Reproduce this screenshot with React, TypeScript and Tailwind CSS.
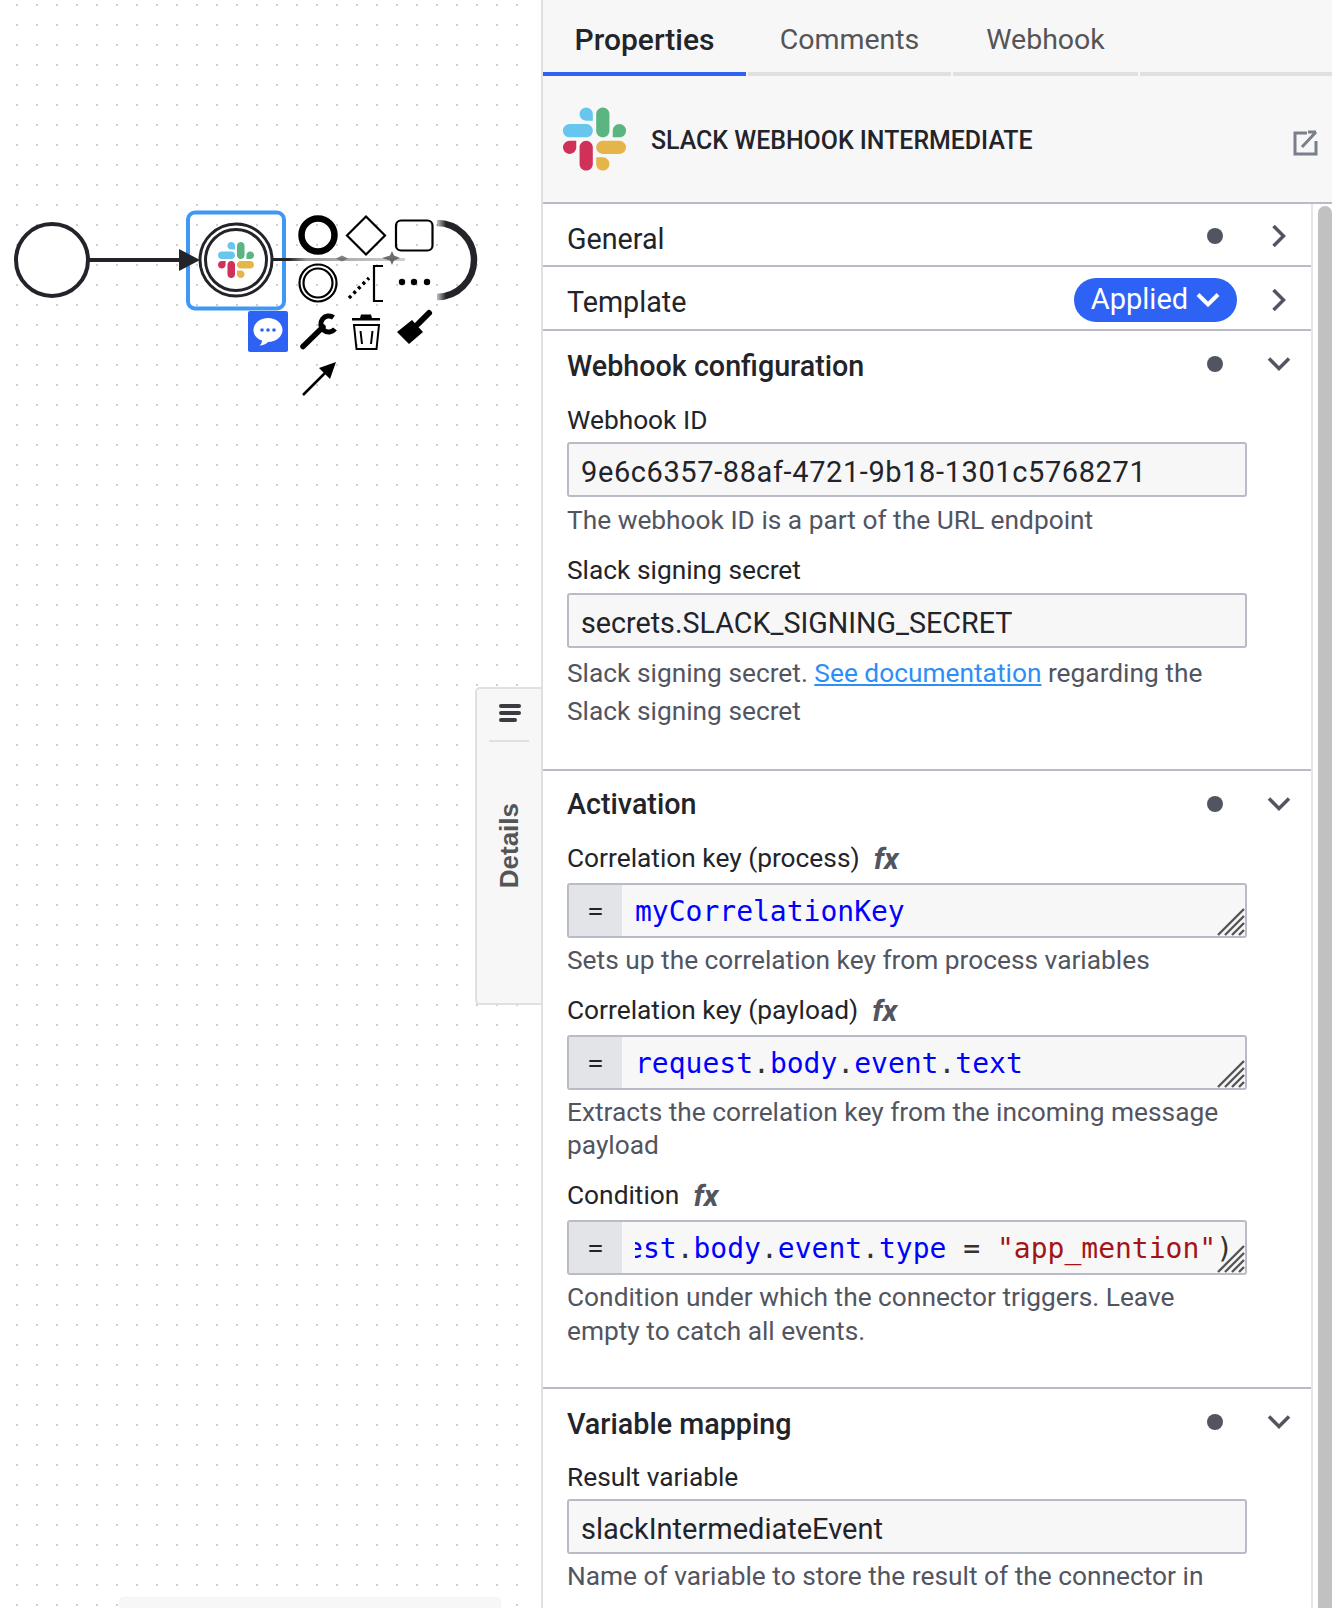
import { ReactNode } from "react";

const SlackLogo = ({ className }: { className: string }) => (
  <svg viewBox="0 0 122.8 122.8" className={className}>
    <path d="M25.8 77.6c0 7.1-5.8 12.9-12.9 12.9S0 84.7 0 77.6s5.8-12.9 12.9-12.9h12.9v12.9z" fill="#cf3159" />
    <path d="M32.3 77.6c0-7.1 5.8-12.9 12.9-12.9s12.9 5.8 12.9 12.9v32.3c0 7.1-5.8 12.9-12.9 12.9s-12.9-5.8-12.9-12.9V77.6z" fill="#cf3159" />
    <path d="M45.2 25.8c-7.1 0-12.9-5.8-12.9-12.9S38.1 0 45.2 0s12.9 5.8 12.9 12.9v12.9H45.2z" fill="#67c5ee" />
    <path d="M45.2 32.3c7.1 0 12.9 5.8 12.9 12.9s-5.8 12.9-12.9 12.9H12.9C5.8 58.1 0 52.3 0 45.2s5.8-12.9 12.9-12.9h32.3z" fill="#67c5ee" />
    <path d="M97 45.2c0-7.1 5.8-12.9 12.9-12.9s12.9 5.8 12.9 12.9-5.8 12.9-12.9 12.9H97V45.2z" fill="#5ab580" />
    <path d="M90.5 45.2c0 7.1-5.8 12.9-12.9 12.9s-12.9-5.8-12.9-12.9V12.9C64.7 5.8 70.5 0 77.6 0s12.9 5.8 12.9 12.9v32.3z" fill="#5ab580" />
    <path d="M77.6 97c7.1 0 12.9 5.8 12.9 12.9s-5.8 12.9-12.9 12.9-12.9-5.8-12.9-12.9V97h12.9z" fill="#e6b54a" />
    <path d="M77.6 90.5c-7.1 0-12.9-5.8-12.9-12.9s5.8-12.9 12.9-12.9h32.3c7.1 0 12.9 5.8 12.9 12.9s-5.8 12.9-12.9 12.9H77.6z" fill="#e6b54a" />
  </svg>
);

const Diagram = () => (
  <svg viewBox="0 190 500 230" className="absolute left-0 top-[190px] w-[500px] h-[230px]">
    <defs>
      <linearGradient id="fadeLine" x1="273" x2="405" y1="0" y2="0" gradientUnits="userSpaceOnUse">
        <stop offset="0.12" stopColor="#22242a" />
        <stop offset="0.25" stopColor="#999999" />
        <stop offset="1" stopColor="#d0d0d0" />
      </linearGradient>
      <linearGradient id="fadeArc" x1="436" x2="446" y1="0" y2="0" gradientUnits="userSpaceOnUse">
        <stop offset="0" stopColor="#22242a" stopOpacity="0.2" />
        <stop offset="1" stopColor="#22242a" />
      </linearGradient>
    </defs>

    {/* start event and flow */}
    <circle cx="52" cy="260" r="36" fill="white" stroke="#22242a" strokeWidth="4" />
    <path d="M89 260H185" stroke="#22242a" strokeWidth="4" />

    {/* selected event */}
    <rect x="188" y="212.500" width="96" height="96" rx="7" fill="none" stroke="#3f97f6" strokeWidth="4" />
    <path d="M200 260L179 249V271Z" fill="#22242a" />
    <circle cx="236" cy="260" r="36" fill="white" stroke="#22242a" strokeWidth="3" />
    <circle cx="236" cy="260" r="30.500" fill="white" stroke="#22242a" strokeWidth="3" />
    <svg x="218" y="242" width="36" height="36" viewBox="0 0 122.8 122.8">
      <path d="M25.8 77.6c0 7.1-5.8 12.9-12.9 12.9S0 84.7 0 77.6s5.8-12.9 12.9-12.9h12.9v12.9z" fill="#cf3159" />
      <path d="M32.3 77.6c0-7.1 5.8-12.9 12.9-12.9s12.9 5.8 12.9 12.9v32.3c0 7.1-5.8 12.9-12.9 12.9s-12.9-5.8-12.9-12.9V77.6z" fill="#cf3159" />
      <path d="M45.2 25.8c-7.1 0-12.9-5.8-12.9-12.9S38.1 0 45.2 0s12.9 5.8 12.9 12.9v12.9H45.2z" fill="#67c5ee" />
      <path d="M45.2 32.3c7.1 0 12.9 5.8 12.9 12.9s-5.8 12.9-12.9 12.9H12.9C5.8 58.1 0 52.3 0 45.2s5.8-12.9 12.9-12.9h32.3z" fill="#67c5ee" />
      <path d="M97 45.2c0-7.1 5.8-12.9 12.9-12.9s12.9 5.8 12.9 12.9-5.8 12.9-12.9 12.9H97V45.2z" fill="#5ab580" />
      <path d="M90.5 45.2c0 7.1-5.8 12.9-12.9 12.9s-12.9-5.8-12.9-12.9V12.9C64.7 5.8 70.5 0 77.6 0s12.9 5.8 12.9 12.9v32.3z" fill="#5ab580" />
      <path d="M77.6 97c7.1 0 12.9 5.8 12.9 12.9s-5.8 12.9-12.9 12.9-12.9-5.8-12.9-12.9V97h12.9z" fill="#e6b54a" />
      <path d="M77.6 90.5c-7.1 0-12.9-5.8-12.9-12.9s5.8-12.9 12.9-12.9h32.3c7.1 0 12.9 5.8 12.9 12.9s-5.8 12.9-12.9 12.9H77.6z" fill="#e6b54a" />
    </svg>

    {/* outgoing flow behind the pad */}
    <path d="M273 259.500H405" stroke="url(#fadeLine)" strokeWidth="3" />
    <path d="M336 258.500L342 255.500L348 258.500L342 261.500Z" fill="#666666" opacity="0.8" />
    <path d="M382 258L390 255.500L392 251L394 255.500L400 258L394 260.500L392 265L390 260.500Z" fill="#555555" opacity="0.85" />
    <path d="M437 223A36.500 36.500 0 0 1 437 297" fill="none" stroke="url(#fadeArc)" strokeWidth="6.500" />

    {/* context pad */}
    <circle cx="318" cy="235" r="16.500" fill="none" stroke="black" strokeWidth="6.500" />
    <path d="M366 216.500L385 235.500L366 254.500L347 235.500Z" fill="none" stroke="black" strokeWidth="2.200" />
    <rect x="396" y="220.500" width="36.500" height="30" rx="5" fill="none" stroke="black" strokeWidth="2.200" />
    <circle cx="318" cy="283" r="18.500" fill="none" stroke="black" strokeWidth="2.200" />
    <circle cx="318" cy="283" r="14.500" fill="none" stroke="black" strokeWidth="2.200" />
    <path d="M349 298L369 278" stroke="black" strokeWidth="3.500" strokeDasharray="3 3.500" />
    <path d="M383 266H374V301H383" fill="none" stroke="black" strokeWidth="2.200" />
    <circle cx="402" cy="282" r="3.200" />
    <circle cx="414" cy="282" r="3.200" />
    <circle cx="427" cy="282" r="3.200" />

    <rect x="248" y="311" width="40" height="41" rx="2" fill="#2d62f5" />
    <path d="M268 318C260 318 253.500 323.500 253.500 330C253.500 335 257 339 262 340.500C262 342.500 261 344.500 259.500 345.500C263 345.500 266 344 268 342C276 342 282.500 336.500 282.500 330C282.500 323.500 276 318 268 318Z" fill="white" />
    <circle cx="262" cy="330" r="1.800" fill="#2d62f5" />
    <circle cx="268" cy="330" r="1.800" fill="#2d62f5" />
    <circle cx="274" cy="330" r="1.800" fill="#2d62f5" />

    <path d="M303 346.500L323 327" stroke="black" strokeWidth="5.500" strokeLinecap="round" />
    <path d="M333.500 317.500A8 8 0 1 0 335 329" fill="none" stroke="black" strokeWidth="5" />

    <path d="M360 318L361 314.500H371L372 318H380V320.500H352V318Z" />
    <path d="M354 325H379L376.500 349H356.500Z" fill="none" stroke="black" strokeWidth="2" />
    <path d="M360.500 331L362 344M372.500 331L371 344" stroke="black" strokeWidth="2" />

    <path d="M429 313L418 324" stroke="black" strokeWidth="6" strokeLinecap="round" />
    <path d="M412 320L423 332L409 344L397 332Z" />

    <path d="M303 395L328 370" stroke="black" strokeWidth="2.500" />
    <path d="M336 362L330 379L319 368Z" />
  </svg>
);

const Chevron = ({ open }: { open?: boolean }) => (
  <svg viewBox="0 0 24 24" className="w-6 h-6 text-[#52555f]">
    <path d={open ? "M2 6.500L12 16.500L22 6.500" : "M6.500 2L16.500 12L6.500 22"} fill="none" stroke="currentColor" strokeWidth="3.500" />
  </svg>
);

const Controls = ({ open }: { open?: boolean }) => (
  <div className="flex items-center">
    <span className="w-4 h-4 rounded-full bg-[#52555f]" />
    <span className="ml-[44px] mr-[20px] flex"><Chevron open={open} /></span>
  </div>
);

const Input = ({ value, className }: { value: string; className?: string }) => (
  <div className={`h-[55px] border-2 border-[#b9bcc6] rounded-[3px] bg-[#f7f7f8] flex items-center pl-[12px] pt-[7px] text-[#22242a] ${className ?? ""}`}>
    {value}
  </div>
);

const Grip = () => (
  <svg viewBox="0 0 28 28" className="absolute right-0 bottom-0 w-[28px] h-[28px]">
    <path d="M1 27L27 1M8 27L27 8M15 27L27 15M22 27L27 22" stroke="#555555" strokeWidth="2.400" />
  </svg>
);

const Editor = ({ children, clip }: { children: ReactNode; clip?: boolean }) => (
  <div className="relative h-[55px] border-2 border-[#b9bcc6] rounded-[3px] bg-[#f7f7f8] flex overflow-hidden font-['DejaVu_Sans_Mono',monospace] text-[28px]">
    <span className="w-[53px] shrink-0 bg-[#e3e4e8] flex items-center justify-center text-[24px] text-[#22242a]">=</span>
    <div className={`flex-1 min-w-0 ml-[13px] pt-[3px] overflow-hidden whitespace-nowrap flex items-center text-[#0000ff] ${clip ? "justify-end pr-[12px]" : ""}`}>
      {children}
    </div>
    <Grip />
  </div>
);

const Field = ({ label, fx, children, className }: { label: string; fx?: boolean; children: ReactNode; className: string }) => (
  <div className={className}>
    <div className="flex items-center h-[34px] pt-[2px] text-[#22242a]">
      {label}
      {fx && <i className="ml-[14px] -mt-[2px] font-bold text-[30px] text-[#52555f]">fx</i>}
    </div>
    {children}
  </div>
);

const Help = ({ children, className }: { children: ReactNode; className: string }) => (
  <p className={`text-[#52555f] ${className}`}>{children}</p>
);

const SectionHead = ({ title, className }: { title: string; className?: string }) => (
  <div className="flex items-center justify-between h-[68px] pl-6">
    <span className={`font-medium text-[28.7px] text-[#22242a] ${className ?? "pt-[3px]"}`}>{title}</span>
    <div className="-mt-[2px]"><Controls open /></div>
  </div>
);

export default function App() {
  return (
    <div className="flex w-[1332px] h-[1608px] overflow-hidden bg-white font-['Roboto',sans-serif] text-[26.3px]">
      {/* canvas */}
      <div className="relative w-[541px] shrink-0">
        <div className="absolute inset-y-0 left-0 w-[528px] bg-[radial-gradient(circle,#cfcfcf_1px,transparent_1.5px)] bg-[size:20px_20px] bg-[position:7px_-5px]" />
        <Diagram />
        <div className="absolute right-0 top-[687px] w-[66px] h-[318px] bg-[#f7f7f8] border-2 border-r-0 border-[#e0e0e0] rounded-l-[5px] flex flex-col items-center">
          <div className="mt-[15px] ml-[2px] flex flex-col gap-[3px] items-start">
            <span className="w-[22px] h-[4px] rounded-full bg-[#3a3c42]" />
            <span className="w-[22px] h-[4px] rounded-full bg-[#3a3c42]" />
            <span className="w-[18px] h-[4px] rounded-full bg-[#3a3c42]" />
          </div>
          <div className="mt-[18px] w-[40px] h-[2px] bg-[#e0e0e0]" />
          <div className="mt-[61px] font-['Liberation_Sans',sans-serif] font-bold text-[26px] text-[#555555] [writing-mode:vertical-rl] rotate-180">
            Details
          </div>
        </div>
        <div className="absolute left-[120px] top-[1598px] w-[380px] h-[10px] bg-[#f7f7f8] rounded-t-[4px] shadow-[0_0_2px_rgba(0,0,0,0.15)]" />
      </div>

      {/* properties panel */}
      <div className="flex-1 min-w-0 flex flex-col border-l-2 border-[#e0e0e0]">
        <div className="bg-[#f7f7f8] border-b-2 border-[#b9bcc6]">
          <div className="flex gap-[2px] h-[76px] text-[28.500px]">
            <div className="w-[203px] border-b-4 border-[#2d62f5] flex items-center justify-center pt-[6px] text-[30px] font-medium text-[#22242a]">Properties</div>
            <div className="w-[203px] border-b-4 border-[#e0e0e0] flex items-center justify-center pt-[8px] text-[#555555]">Comments</div>
            <div className="w-[185px] border-b-4 border-[#e0e0e0] flex items-center justify-center pt-[8px] text-[#555555]">Webhook</div>
            <div className="flex-1 border-b-4 border-[#e0e0e0]" />
          </div>
          <div className="h-[126px] flex items-center pl-[20px] pr-[14px]">
            <SlackLogo className="w-[63px] h-[64px]" />
            <span className="ml-[25px] pt-[4px] font-medium text-[24.900px] text-[#22242a]">SLACK WEBHOOK INTERMEDIATE</span>
            <svg viewBox="0 0 26 26" className="ml-auto mt-[8px] w-[26px] h-[26px]">
              <path d="M15 3H3V24H24V11" fill="none" stroke="#7a7f8c" strokeWidth="3" />
              <path d="M10 17L24 2M16 2H24V2" fill="none" stroke="#7a7f8c" strokeWidth="3" />
            </svg>
          </div>
        </div>

        <div className="flex-1 min-h-0 flex overflow-hidden">
          <div className="w-[768px] shrink-0">
            <div className="flex items-center justify-between h-[63px] border-b-2 border-[#b9bcc6] pl-6">
              <span className="text-[28.7px] pt-[10px] text-[#22242a]">General</span>
              <div className="mt-[2px]"><Controls /></div>
            </div>
            <div className="flex items-center justify-between h-[64px] border-b-2 border-[#b9bcc6] pl-6">
              <span className="text-[28.7px] pt-[10px] text-[#22242a]">Template</span>
              <div className="flex items-center mt-[3px]">
                <span className="h-[44px] w-[163px] rounded-full bg-[#2d62f5] text-white text-[29px] flex items-center justify-center gap-2">
                  Applied
                  <svg viewBox="0 0 24 24" className="w-6 h-6">
                    <path d="M2 6.500L12 16.500L22 6.500" fill="none" stroke="white" strokeWidth="4" />
                  </svg>
                </span>
                <span className="ml-[30px] mr-[20px] flex"><Chevron /></span>
              </div>
            </div>

            <section className="border-b-2 border-[#b9bcc6] pb-[39px]">
              <SectionHead title="Webhook configuration" />
              <div className="pl-6 pr-[64px]">
                <Field label="Webhook ID" className="mt-[4px]">
                  <div className="mt-[5px]"><Input className="text-[29px] tracking-[0.6px]" value="9e6c6357-88af-4721-9b18-1301c5768271" /></div>
                  <Help className="mt-[6px] leading-[34px]">The webhook ID is a part of the URL endpoint</Help>
                </Field>
                <Field label="Slack signing secret" className="mt-[16px]">
                  <div className="mt-[6px]"><Input className="text-[28.7px]" value="secrets.SLACK_SIGNING_SECRET" /></div>
                  <Help className="mt-[6px] leading-[38px]">
                    Slack signing secret. <a className="text-[#2d8ff5] underline">See documentation</a> regarding the Slack signing secret
                  </Help>
                </Field>
              </div>
            </section>

            <section className="border-b-2 border-[#b9bcc6] pb-[39px]">
              <SectionHead title="Activation" className="-mt-[1px]" />
              <div className="pl-6 pr-[64px]">
                <Field fx label="Correlation key (process)" className="mt-[2px]">
                  <div className="mt-[8px]"><Editor>myCorrelationKey</Editor></div>
                  <Help className="mt-[5px] leading-[34px]">Sets up the correlation key from process variables</Help>
                </Field>
                <Field fx label="Correlation key (payload)" className="mt-[16px]">
                  <div className="mt-[8px]">
                    <Editor>request<span className="text-[#333333]">.</span>body<span className="text-[#333333]">.</span>event<span className="text-[#333333]">.</span>text</Editor>
                  </div>
                  <Help className="mt-[6px] leading-[33px]">Extracts the correlation key from the incoming message payload</Help>
                </Field>
                <Field fx label="Condition" className="mt-[16px]">
                  <div className="mt-[8px]">
                    <Editor clip>
                      <span className="shrink-0">
                        request<span className="text-[#333333]">.</span>body<span className="text-[#333333]">.</span>event<span className="text-[#333333]">.</span>type <span className="text-[#333333]">=</span> <span className="text-[#a31515]">"app_mention"</span><span className="text-[#333333]">)</span>
                      </span>
                    </Editor>
                  </div>
                  <Help className="mt-[5px] leading-[34px]">Condition under which the connector triggers. Leave empty to catch all events.</Help>
                </Field>
              </div>
            </section>

            <section>
              <SectionHead title="Variable mapping" />
              <div className="pl-6 pr-[64px]">
                <Field label="Result variable" className="mt-[3px]">
                  <div className="mt-[5px]"><Input className="text-[29px]" value="slackIntermediateEvent" /></div>
                  <Help className="mt-[5px] leading-[34px] whitespace-nowrap">Name of variable to store the result of the connector in</Help>
                </Field>
              </div>
            </section>
          </div>

          {/* scrollbar */}
          <div className="flex-1 border-l-2 border-[#e6e6e6] pt-[2px] pl-[5px]">
            <div className="h-full rounded-t-full bg-[#c1c1c1]" />
          </div>
        </div>
      </div>
    </div>
  );
}
